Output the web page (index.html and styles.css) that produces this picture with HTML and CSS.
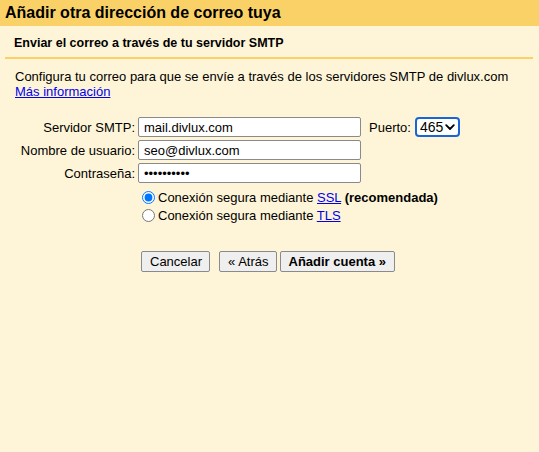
FILE: index.html
```html
<!DOCTYPE html>
<html lang="es">
<head>
    <meta charset="UTF-8">
    <title>Añadir otra dirección de correo tuya</title>
    <link rel="stylesheet" href="styles.css">
</head>
<body>
    <div class="cabecera">Añadir otra dirección de correo tuya</div>
    <div class="contenido">
        <div class="subtitulo">Enviar el correo a través de tu servidor SMTP</div>
        <div class="separador"></div>
        <p class="intro">
            Configura tu correo para que se envíe a través de los servidores SMTP de divlux.com<br>
            <a href="#">Más información</a>
        </p>

        <div class="formulario">
            <label class="etiqueta" for="smtp">Servidor SMTP:</label>
            <div class="fila-servidor">
                <input id="smtp" class="campo" type="text" value="mail.divlux.com">
                <label class="puerto" for="puerto">Puerto:</label>
                <div class="caja-selector">
                    <select id="puerto" class="selector">
                        <option>465</option>
                        <option>587</option>
                        <option>25</option>
                    </select>
                    <svg class="flecha" width="10" height="7" viewBox="0 0 10 7">
                        <path d="M1.2 1.2 L5 5 L8.8 1.2" fill="none" stroke="#000" stroke-width="1.8" stroke-linecap="round" stroke-linejoin="round"/>
                    </svg>
                </div>
            </div>

            <label class="etiqueta" for="usuario">Nombre de usuario:</label>
            <input id="usuario" class="campo" type="text" value="seo@divlux.com">

            <label class="etiqueta" for="clave">Contraseña:</label>
            <input id="clave" class="campo" type="password" value="contraseña">

            <div></div>
            <div class="opciones">
                <label class="opcion"><input type="radio" name="seguridad" checked>Conexión segura mediante <a href="#">SSL</a> <b>(recomendada)</b></label>
                <label class="opcion"><input type="radio" name="seguridad">Conexión segura mediante <a href="#">TLS</a></label>
            </div>
        </div>

        <div class="botones">
            <button class="boton">Cancelar</button>
            <button class="boton atras">« Atrás</button>
            <button class="boton principal">Añadir cuenta »</button>
        </div>
    </div>
</body>
</html>
```

FILE: styles.css
```css
body {
    margin: 0;
    background-color: #fef5d8;
    font-family: "Liberation Sans", Arial, sans-serif;
    font-size: 13px;
    color: #000;
    min-height: 452px;
}

.cabecera {
    background-color: #f9d166;
    font-size: 16px;
    font-weight: bold;
    height: 26px;
    line-height: 25px;
    padding-left: 5px;
}

.contenido {
    padding: 0 6px 0 5px;
}

.subtitulo {
    font-size: 12.5px;
    font-weight: bold;
    padding: 10px 0 0 9px;
    height: 20px;
}

.separador {
    height: 2px;
    background-color: #f9d166;
    margin-top: 1px;
}

.intro {
    margin: 10px 0 0 10px;
    line-height: 15px;
}

a {
    color: #0000ee;
}

.formulario {
    display: grid;
    grid-template-columns: 128px auto;
    column-gap: 3px;
    row-gap: 3px;
    align-items: center;
    margin-top: 18px;
    margin-left: 2px;
}

.etiqueta {
    text-align: right;
    white-space: nowrap;
}

.fila-servidor {
    display: flex;
    align-items: center;
}

.campo {
    box-sizing: border-box;
    width: 223px;
    height: 20px;
    margin: 0;
    padding: 0 5px;
    font-family: inherit;
    font-size: 13px;
    border: 1px solid #8a8a8a;
    border-radius: 2px;
    background: #fff;
}

.puerto {
    margin-left: 8px;
    margin-right: 4px;
}

/* el selector lleva su propia flecha */
.caja-selector {
    position: relative;
    width: 45px;
    height: 20px;
}

.selector {
    appearance: none;
    -webkit-appearance: none;
    box-sizing: border-box;
    width: 45px;
    height: 20px;
    margin: 0;
    padding: 0 0 0 3px;
    font-family: inherit;
    font-size: 14px;
    border: 2px solid #1a65d6;
    border-radius: 4px;
    background: #fff;
    color: #000;
}

.flecha {
    position: absolute;
    right: 5px;
    top: 7px;
    pointer-events: none;
}

.opciones {
    margin-top: 3px;
}

.opcion {
    display: block;
    height: 18px;
    line-height: 18px;
    white-space: nowrap;
}

.opcion input {
    margin: 0 3px 0 4px;
    width: 13px;
    height: 13px;
    vertical-align: -2px;
}

.botones {
    display: flex;
    margin-top: 26px;
    margin-left: 136px;
}

.boton {
    height: 21px;
    padding: 0 7px 0 8px;
    font-family: inherit;
    font-size: 13px;
    background: #efefef;
    border: 1px solid #8a8a8a;
    border-radius: 2px;
    color: #000;
}

.atras {
    margin-left: 9px;
}

.principal {
    margin-left: 3px;
    padding: 0 8px;
    font-weight: bold;
}
```
